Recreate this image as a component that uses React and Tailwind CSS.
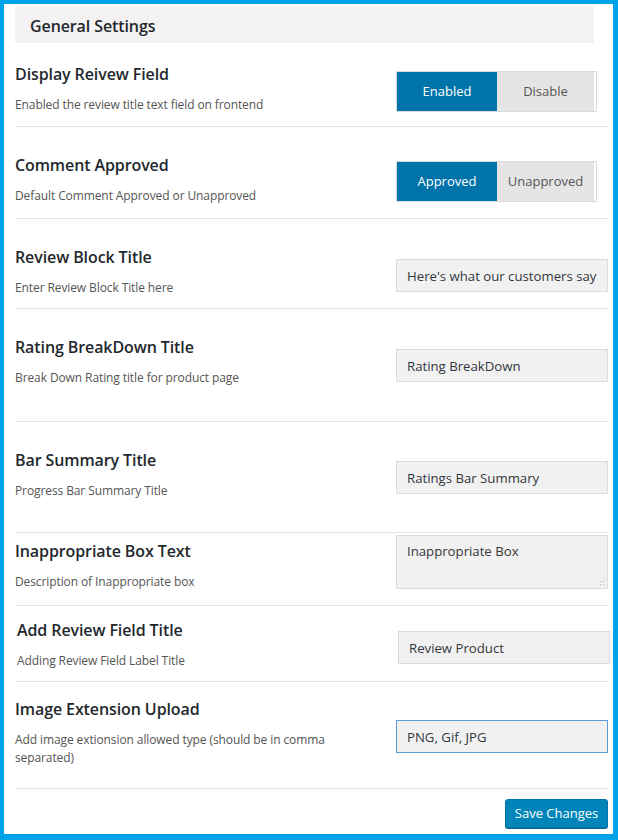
import React from 'react';

const font = "font-['Open_Sans','Noto_Sans',sans-serif]";

function Row({ rowClass, titleClass, controlClass, title, desc, children }) {
    return (
        <div className={`flex border-b border-[#e4e4e4] ${rowClass}`}>
            <div className={`w-[381px] shrink-0 ${titleClass}`}>
                <h3 className="text-[16px] leading-[20px] font-semibold text-[#23282d] tracking-[-0.1px]">{title}</h3>
                <p className="mt-[12px] text-[12px] leading-[18px] text-[#555] tracking-[-0.1px]">{desc}</p>
            </div>
            <div className={controlClass}>{children}</div>
        </div>
    );
}

function Toggle({ on, off }) {
    return (
        <div className="flex h-[41px] w-[201px] border border-[#dadada]">
            <button className="w-[100px] bg-[#0073aa] text-white text-[13px]">{on}</button>
            <button className="flex-1 bg-[#e5e5e5] text-[#555] text-[13px] border-r-2 border-white">{off}</button>
        </div>
    );
}

function TextField({ value, focused }) {
    return (
        <input
            readOnly
            value={value}
            className={`h-[33px] w-[212px] bg-[#f1f1f1] px-[10px] text-[13.2px] text-[#32373c] outline-none border ${focused ? 'border-[#5b9dd9]' : 'border-[#dcdcdc]'} ${font}`}
        />
    );
}

export default function App() {
    return (
        <div className={`w-[618px] h-[840px] bg-white border-solid border-[#00a2e8] border-t-4 border-l-4 border-r-[5px] border-b-[6px] ${font}`}>
            <div className="pl-[11px] pr-[5px]">
                {/* Section header */}
                <div className="mt-[2px] h-[37px] w-[579px] bg-[#f3f1f1] flex items-center pl-[15px] pt-[3px]">
                    <h2 className="text-[16px] font-semibold text-[#23282d] tracking-[-0.1px]">General Settings</h2>
                </div>

                <Row rowClass="h-[84px]" titleClass="pt-[21px]" controlClass="pt-[28px]"
                    title="Display Reivew Field" desc="Enabled the review title text field on frontend">
                    <Toggle on="Enabled" off="Disable" />
                </Row>

                <Row rowClass="h-[92px]" titleClass="pt-[28px]" controlClass="pt-[34px]"
                    title="Comment Approved" desc="Default Comment Approved or Unapproved">
                    <Toggle on="Approved" off="Unapproved" />
                </Row>

                <Row rowClass="h-[90px]" titleClass="pt-[28px]" controlClass="pt-[40px]"
                    title="Review Block Title" desc="Enter Review Block Title here">
                    <TextField value="Here's what our customers say" />
                </Row>

                <Row rowClass="h-[113px]" titleClass="pt-[28px]" controlClass="pt-[40px]"
                    title="Rating BreakDown Title" desc="Break Down Rating title for product page">
                    <TextField value="Rating BreakDown" />
                </Row>

                <Row rowClass="h-[111px]" titleClass="pt-[28px]" controlClass="pt-[39px]"
                    title="Bar Summary Title" desc="Progress Bar Summary Title">
                    <TextField value="Ratings Bar Summary" />
                </Row>

                <Row rowClass="h-[73px]" titleClass="pt-[8px]" controlClass="pt-[2px]"
                    title="Inappropriate Box Text" desc="Description of Inappropriate box">
                    <div className="relative h-[54px] w-[212px] bg-[#f1f1f1] border border-[#dcdcdc] px-[10px] pt-[6px] text-[13.2px] text-[#32373c]">
                        Inappropriate Box
                        <svg className="absolute right-[2px] bottom-[2px]" width="6" height="8" viewBox="0 0 6 8" fill="#b5b5b5">
                            <rect x="4" y="0" width="1" height="1" />
                            <rect x="4" y="3" width="1" height="1" />
                            <rect x="1" y="3" width="1" height="1" />
                            <rect x="4" y="6" width="1" height="1" />
                            <rect x="1" y="6" width="1" height="1" />
                        </svg>
                    </div>
                </Row>

                <Row rowClass="h-[76px]" titleClass="pt-[14px] pl-[2px]" controlClass="pt-[25px] pl-[2px]"
                    title="Add Review Field Title" desc="Adding Review Field Label Title">
                    <TextField value="Review Product" />
                </Row>

                <Row rowClass="h-[107px]" titleClass="pt-[17px]" controlClass="pt-[38px]"
                    title="Image Extension Upload"
                    desc={<>Add image extionsion allowed type (should be in comma<br />separated)</>}>
                    <TextField value="PNG, Gif, JPG" focused />
                </Row>

                {/* Footer */}
                <div className="flex justify-end pt-[10px]">
                    <button className="h-[29px] w-[103px] rounded-[3px] bg-[#0085ba] border border-[#0073aa] shadow-[0_1px_0_#006799] text-white text-[13px]">
                        Save Changes
                    </button>
                </div>
            </div>
        </div>
    );
}
